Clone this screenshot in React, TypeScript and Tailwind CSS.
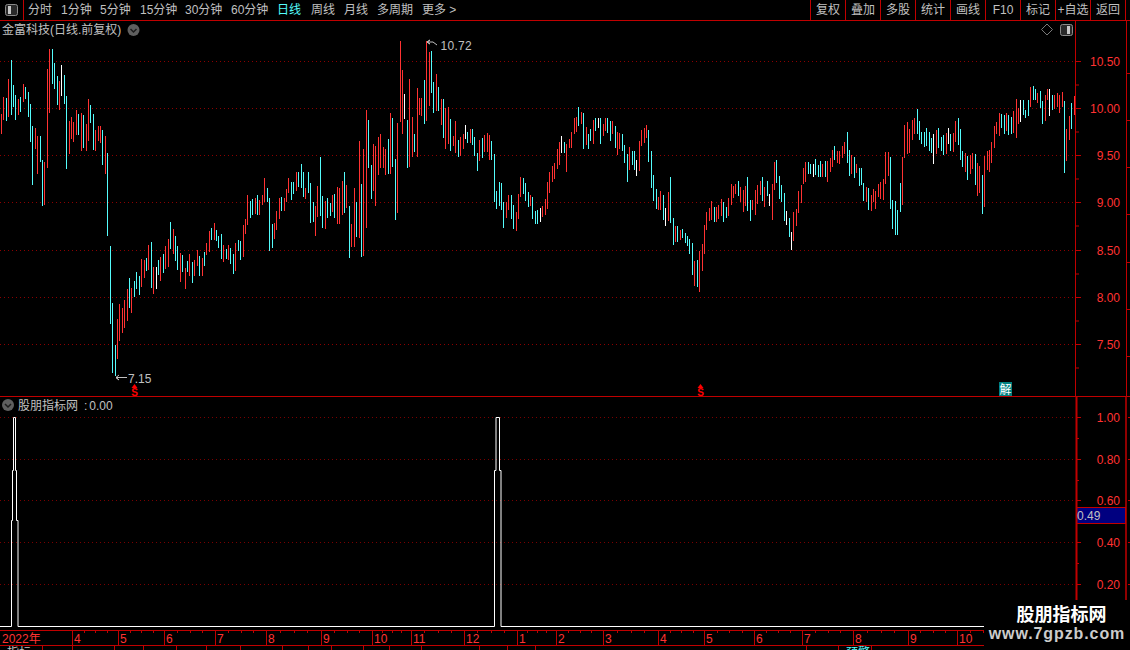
import React from "react";

const RED = "#c00000";
const TXT = "#ff3232";
const COL: Record<string, string> = { r: "#ff3232", c: "#54fcfc", w: "#ffffff" };

type Seg = { x: number; y1: number; y2: number; c: string };

function parse(ox: number, oy: number, s: string): Seg[] {
  return s
    .trim()
    .split(/\s+/)
    .map((t) => {
      const [a, y1, y2] = t.slice(1).split(",").map(Number);
      return { x: Math.floor(ox + a / 3) + 0.5, y1: oy + y1 / 3, y2: oy + y2 / 3, c: COL[t[0]] };
    });
}

const bars: Seg[] = [
  ...parse(0, 40, `r4,222,282 r10,171,240 c19,174,243 r25,117,231 c34,60,225 c40,135,201 c46,165,240 r55,177,225 c61,171,216 r70,132,186 c76,141,177 c85,156,231 c91,192,306 c97,258,435 r106,264,327 r112,288,402 c121,288,366 c127,360,498 r133,366,495 r142,87,384 r148,27,219 c157,27,132 c163,69,147 c172,108,195 r178,123,210 w184,75,168 c193,105,192 c199,168,387 r208,243,342 r214,231,297 r220,246,306 r229,210,285 c235,222,285 r244,219,333 c250,225,324 r259,252,333 r265,177,303 c271,195,249 c280,222,330 r286,270,333 r295,258,303 r301,258,309 c307,270,375 r316,288,402 c322,339,588`),
  ...parse(0, 270, `c331,-72,162 c337,99,309 c346,225,318 r352,147,267 r358,102,213 r367,114,189 r373,90,174 r382,57,153 c388,24,114 r394,54,129 c403,33,81 c409,6,57 c418,18,75`),
  ...parse(105, 170, `r109,267,351 r118,270,324 c124,264,303 r130,225,300 c139,216,354 r145,291,372 w154,291,357 c160,270,315 r166,261,333 c175,252,309 r181,228,297 r190,207,291 c196,156,237 r205,177,252 c211,198,273 c217,228,300 r226,249,336 c232,255,306 r241,294,357 c247,273,306 r253,252,318 c262,276,339 r268,270,318 r277,240,288 c283,258,318 r292,264,318 c298,246,288 r304,219,255 r313,183,246 c319,174,210 r328,159,210 c334,180,213 c340,198,234 c349,192,267 r355,225,276 c364,237,267 r370,225,270 c376,234,282 c385,252,312 r391,219,303 c400,210,243 c406,213,270 r415,165,261 r421,147,192 r427,75,165 c436,93,144 c442,87,135 r451,84,132 c457,75,135 r463,90,135 r472,75,105 r478,24,96 c487,54,96 c493,84,243 c502,162,234 r508,159,207 r514,123,180 r523,84,147 c529,81,123 r538,84,123 r544,57,96 r550,24,69 c559,36,90 c565,36,72`),
  ...parse(280, 30, `r49,426,483 c55,426,471 c64,402,474 c70,426,501 r76,474,507 c85,426,489 c91,459,579 c100,516,576 r106,528,618 r112,468,561 c121,381,558 c127,498,594 r136,513,597 c142,504,564 c151,519,558 r157,495,546 c163,492,564 r172,471,582 r178,474,582 r187,453,555 c193,426,549 r199,465,534 c208,528,684 r214,582,651 r223,474,651 c229,516,621 r238,333,624 c244,462,681 r250,357,678 r259,240,594 c265,270,414 c274,405,507 r280,342,483 r286,348,528 r295,321,435 r301,312,414 r310,351,414 r316,357,435 c325,327,432 r331,249,432 c337,264,411 c346,387,570 r352,279,549 r361,33,276 r367,120,312 w373,192,267 c382,270,414 r388,147,411 r397,261,381 c403,312,366 r412,174,381 r418,204,255 r424,204,258 c433,150,282 r439,33,273 r448,66,228 c454,63,189 c460,156,249 r469,132,243 c475,171,243 r484,207,285 c490,207,324 r496,234,357 r505,231,342 c511,267,363 r520,318,348 r526,273,369 c535,330,381 r541,321,378 r550,312,357 w556,285,327 c562,306,339 r571,297,339 c577,297,345 c583,321,378 c592,369,423 r598,330,393 c607,324,384 r613,315,366 r622,309,366 r628,315,390 c634,333,390 c643,372,516 c649,483,537 c658,456,528 c664,459,540 c670,516,594 r679,516,564 r685,495,540 c694,495,567 c700,525,597 r709,546,603 r715,492,567 r721,441,501 c730,444,492 c736,459,513 c745,486,531 r751,495,528 c757,501,567 c766,543,582 c772,540,582 w781,534,576 r787,528,561 r796,507,555 r802,456,537 r808,426,489 r817,408,456 r823,399,447 r832,357,417 r838,336,405`),
  ...parse(560, 90, `w4,138,189 c13,156,189 r19,162,246 r28,147,174 r34,126,174 r43,84,132 r49,81,126 c55,51,108 r64,66,102 c70,69,177 r79,111,165 c85,132,177 c91,117,153 r100,90,162 c106,84,123 w115,84,114 c121,84,162 r130,102,138 r136,84,123 c142,84,129 c151,93,153 r157,93,132 c166,108,174 r172,126,196 r178,129,177 c187,132,183 c193,165,219 c202,192,276 r208,171,240 c217,183,225 c223,183,240 w229,210,258 r238,153,243 r244,120,168 r253,114,159 r259,105,144 c265,120,216 c274,183,294 c280,255,333 c289,297,357 r295,321,360 r301,303,360 c310,315,390 w316,354,408 r325,306,393 c331,261,399 c340,384,465 r346,408,456 c352,408,456 r361,420,450 c367,417,444 c376,429,459 c382,438,468 c388,447,492 c397,459,555 r403,513,588 c412,510,591 r418,483,606 r427,462,543 r433,405,492 r439,366,420 r448,354,393 r454,333,390 c463,351,396 r469,351,396 r475,345,387 r484,327,378 c490,336,396 c499,351,384 r505,324,378 r514,282,345 r520,288,324 r526,282,312 c535,273,318 r541,291,336 r550,300,366 r556,288,348 c562,261,363 c571,330,393 r577,330,360 r586,300,375 r592,285,342 r601,273,315 c607,261,333 r613,291,351 c622,273,318 w628,312,348 r637,282,390 r643,216,300 c649,210,279 c658,258,327 c664,285,336 c673,309,393 w679,363,405 c688,384,441 w694,426,480 r700,366,453 r709,357,408 r715,303,369 r724,285,339 r730,234,282 r736,216,276 c745,216,252 c751,222,252 w760,222,261 c766,207,255 c775,225,261 c781,213,261 r787,222,261 c796,213,261 r802,213,276`),
  ...parse(830, 80, `r1,234,276 r7,210,261 c13,198,240 r22,213,249 r28,213,252 r37,198,234 r43,186,222 c52,156,249 c58,210,288 r64,225,282 c73,231,294 r79,252,279 c88,264,318 c94,264,315 c100,309,363 r109,321,366 c115,324,390 r124,345,393 r130,327,366 r136,333,387 r145,312,351 r151,306,357 r160,297,360 r166,216,312 r175,216,288 c181,231,387 c187,360,447 c196,363,465 c202,390,465 c211,309,396 r217,231,375 r223,135,234 r232,126,222 r238,147,219 r247,120,180 r253,114,162 c262,87,162 c268,123,180 c274,156,192 c283,156,201 c289,144,198 c298,156,213 c304,174,219 w310,162,252 r319,150,222 c325,144,204 c334,171,213 c340,165,225 r349,159,222 w355,144,192 c361,162,213 r370,159,216 r376,123,186 c385,114,195 c391,147,240 c397,213,261 r406,219,276 c412,228,300 r421,225,282 r427,219,267 c436,222,315 r442,249,348 r448,258,339 c457,285,402 r463,228,381 r472,213,270 r478,210,276 r484,186,249 r493,138,204 r499,126,162 r508,99,168 c514,102,144 c523,105,162 r529,99,153 c535,105,165 c544,111,162 r550,93,159 r559,57,174 r565,84,132 w571,60,126 c580,60,105 c586,90,114 c595,60,108 r601,21,81 c610,18,60 c616,27,60 r622,39,69 c631,33,84 c637,63,132 r646,45,123 r652,27,60 w658,27,108 c667,45,90 r673,45,87 r682,39,81 r688,45,99 r697,36,81 c703,63,279 r709,147,243 r718,108,180 c724,69,147 r733,48,105`),
];

const priceGrid: [number, string][] = [
  [61, "10.50"], [108, "10.00"], [155, "9.50"], [202, "9.00"], [250, "8.50"], [297, "8.00"], [344, "7.50"],
];
const indGrid: [number, string][] = [
  [417, "1.00"], [459, "0.80"], [500, "0.60"], [542, "0.40"], [584, "0.20"],
];

const leftTabs: [string, number, boolean?][] = [
  ["分时", 33], ["1分钟", 39], ["5分钟", 40], ["15分钟", 45], ["30分钟", 46], ["60分钟", 46],
  ["日线", 34, true], ["周线", 33], ["月线", 33], ["多周期", 45], ["更多 >", 40],
];
const rightBtns = ["复权", "叠加", "多股", "统计", "画线", "F10", "标记", "+自选", "返回"];

const months: [number, string][] = [
  [72, "4"], [118, "5"], [164, "6"], [215, "7"], [266, "8"], [321, "9"], [372, "10"], [411, "11"], [464, "12"],
  [517, "1"], [556, "2"], [603, "3"], [658, "4"], [704, "5"], [754, "6"], [802, "7"], [853, "8"], [908, "9"], [957, "10"],
];

const bottomCells = [43, 30, 42, 29, 33, 30, 34, 42, 26, 23, 32, 26, 32, 58, 28, 28, 271, 32, 33];

function ToggleIcon({ right }: { right?: boolean }) {
  return (
    <svg width="13" height="12" viewBox="0 0 13 12">
      <rect x="0.5" y="0.5" width="12" height="11" rx="2" fill="#2a2a2a" stroke="#8a8a8a" />
      <rect x={right ? 7 : 3} y="2" width="3" height="8" fill="#c8c8c8" />
    </svg>
  );
}

function Chevron({ x, y }: { x: number; y: number }) {
  return (
    <g>
      <circle cx={x} cy={y} r="6" fill="#5f5f5f" />
      <polyline points={`${x - 3},${y - 1} ${x},${y + 2} ${x + 3},${y - 1}`} fill="none" stroke="#1c1c1c" strokeWidth="1.5" />
    </g>
  );
}

function Signal({ x }: { x: number }) {
  return (
    <g>
      <polygon points={`${x},384 ${x - 3},388 ${x + 3},388`} fill="#ff0000" />
      <text x={x} y="395.5" textAnchor="middle" fontSize="10" fontWeight="700" fill="#ff0000">S</text>
    </g>
  );
}

export default function App() {
  return (
    <div className="relative flex h-[650px] w-[1130px] flex-col overflow-hidden bg-black font-['Liberation_Sans','Noto_Sans_CJK_SC',sans-serif] text-[12px] text-[#c0c0c0]">
      <header className="flex h-[21px] shrink-0 items-center border-b border-[#c00000]">
        <div className="flex h-full w-[24px] items-center justify-center border-r border-[#c00000]">
          <ToggleIcon />
        </div>
        <nav className="ml-[4px] flex flex-1">
          {leftTabs.map(([label, w, active]) => (
            <span key={label} style={{ width: w }} className={active ? "text-[#54fcfc]" : ""}>
              {label}
            </span>
          ))}
        </nav>
        {rightBtns.map((b) => (
          <div key={b} className="flex h-full w-[35px] items-center justify-center whitespace-nowrap border-l border-[#c00000]">
            {b}
          </div>
        ))}
        <div className="h-full w-[5px] border-l border-[#c00000]" />
      </header>

      <section className="relative h-[375px] shrink-0">
        <svg width="1130" height="375" viewBox="0 21 1130 375" className="block">
          {priceGrid.map(([y]) => (
            <line key={y} x1="0" x2="1075" y1={y + 0.5} y2={y + 0.5} stroke="#8c0000" strokeDasharray="1 3" />
          ))}
          {bars.map((b, i) => (
            <line key={i} x1={b.x} x2={b.x} y1={b.y1} y2={b.y2} stroke={b.c} shapeRendering="crispEdges" />
          ))}
          <line x1="1075.5" x2="1075.5" y1="21" y2="396" stroke={RED} />
          <line x1="1126.5" x2="1126.5" y1="21" y2="396" stroke={RED} />
          {priceGrid.map(([y, t]) => (
            <g key={t}>
              <line x1="1076" x2="1081" y1={y + 0.5} y2={y + 0.5} stroke={RED} />
              <line x1="1076" x2="1079" y1={y + 24} y2={y + 24} stroke={RED} />
              <line x1="1127" x2="1130" y1={y + 12.5} y2={y + 12.5} stroke={RED} />
              <text x="1120" y={y + 5} textAnchor="end" fontSize="12" fill={TXT}>{t}</text>
            </g>
          ))}
          <polyline points="427,42 430,40 427,42 430,44 427,42 433,42 437,45" fill="none" stroke="#c0c0c0" />
          <text x="440.5" y="50" fontSize="12" letterSpacing="0.3" fill="#c0c0c0">10.72</text>
          <polyline points="119,375 116,377.5 119,380 116,377.5 127,377.5" fill="none" stroke="#c0c0c0" />
          <text x="128" y="383" fontSize="12" fill="#c0c0c0">7.15</text>
          <Signal x={134.5} />
          <Signal x={700.5} />
          <rect x="999" y="382" width="13" height="14" fill="#008080" />
          <text x="1005.5" y="394" textAnchor="middle" fontSize="12" fill="#ffffff">解</text>
          <Chevron x={133.5} y={30} />
          <polygon points="1047,24 1052.5,29.5 1047,35 1041.5,29.5" fill="none" stroke="#7a7a7a" />
        </svg>
        <div className="absolute left-[2px] top-[1px] whitespace-nowrap leading-[16px]">金富科技(日线.前复权)</div>
        <div className="absolute left-[1060px] top-[3px] flex">
          <ToggleIcon right />
        </div>
      </section>

      <div className="h-[1px] shrink-0 bg-[#c00000]" />

      <section className="relative h-[233px] shrink-0">
        <svg width="1130" height="233" viewBox="0 397 1130 233" className="block">
          {indGrid.map(([y]) => (
            <line key={y} x1="0" x2="1075" y1={y + 0.5} y2={y + 0.5} stroke="#7a0000" strokeDasharray="1 3" />
          ))}
          <path
            d="M0 626.5H11.5V520.5H12.5V470.5H13.5V417.5H15.5V470.5H16.5V520.5H18V626.5H494.5V470.5H496V417.5H499.5V470.5H501V626.5H984"
            fill="none"
            stroke="#ffffff"
          />
          <line x1="1076.5" x2="1076.5" y1="397" y2="600" stroke={RED} strokeWidth="2" />
          <line x1="1126" x2="1126" y1="397" y2="600" stroke={RED} strokeWidth="1.5" />
          {indGrid.map(([y, t]) => (
            <g key={t}>
              <line x1="1077" x2="1081" y1={y + 0.5} y2={y + 0.5} stroke={RED} />
              <line x1="1077" x2="1079" y1={y + 21.5} y2={y + 21.5} stroke={RED} />
              <line x1="1128" x2="1130" y1={y + 0.5} y2={y + 0.5} stroke={RED} />
              <text x="1120" y={y + 5} textAnchor="end" fontSize="12" fill={TXT}>{t}</text>
            </g>
          ))}
          <rect x="1077" y="507.5" width="48.5" height="16" fill="#000080" stroke={RED} />
          <text x="1077" y="520" fontSize="12" fill="#c0c0c0">0.49</text>
          <Chevron x={8} y={405} />
        </svg>
        <div className="absolute left-[18px] top-[1px] whitespace-nowrap leading-[16px]">
          股朋指标网<span className="ml-[6px]">:</span>
          <span className="ml-[2px]">0.00</span>
        </div>
      </section>

      <div className="h-[16px] shrink-0 border-y border-[#c00000]">
        <svg width="984" height="14" viewBox="0 632 984 14" className="block">
          {months.map(([x, t], i) => {
            const next = i + 1 < months.length ? months[i + 1][0] : 1008;
            return (
              <g key={x + t}>
                <line x1={x + 0.5} x2={x + 0.5} y1="632" y2="646" stroke={RED} />
                {[1, 2, 3].map((k) => {
                  const tx = Math.round(x + ((next - x) * k) / 4) + 0.5;
                  return tx < 984 ? <line key={k} x1={tx} x2={tx} y1="632" y2="634" stroke={RED} /> : null;
                })}
                <text x={x + 2} y="644" fontSize="12" fill={TXT}>{t}</text>
              </g>
            );
          })}
          <text x="2" y="644" fontSize="12" fill={TXT}>2022年</text>
        </svg>
      </div>

      <footer className="flex h-[4px] overflow-hidden leading-[14px] text-[12px]">
        {bottomCells.map((w, i) => (
          <div key={i} style={{ width: w }} className={`shrink-0 border-r border-[#c00000] pl-[7px] ${i === 18 ? "text-[#54fcfc]" : ""}`}>
            {i === 0 ? "指标" : i === 18 ? "预警" : ""}
          </div>
        ))}
      </footer>

      <aside className="absolute bottom-0 right-0 flex h-[50px] w-[146px] flex-col items-center bg-black pt-[4px] font-bold">
        <div className="pl-[9px] text-[18px] leading-[22px] text-white">股朋指标网</div>
        <div className="text-[16px] leading-[16px] tracking-[0.9px] text-[#cccccc]">www.7gpzb.com</div>
      </aside>
    </div>
  );
}
